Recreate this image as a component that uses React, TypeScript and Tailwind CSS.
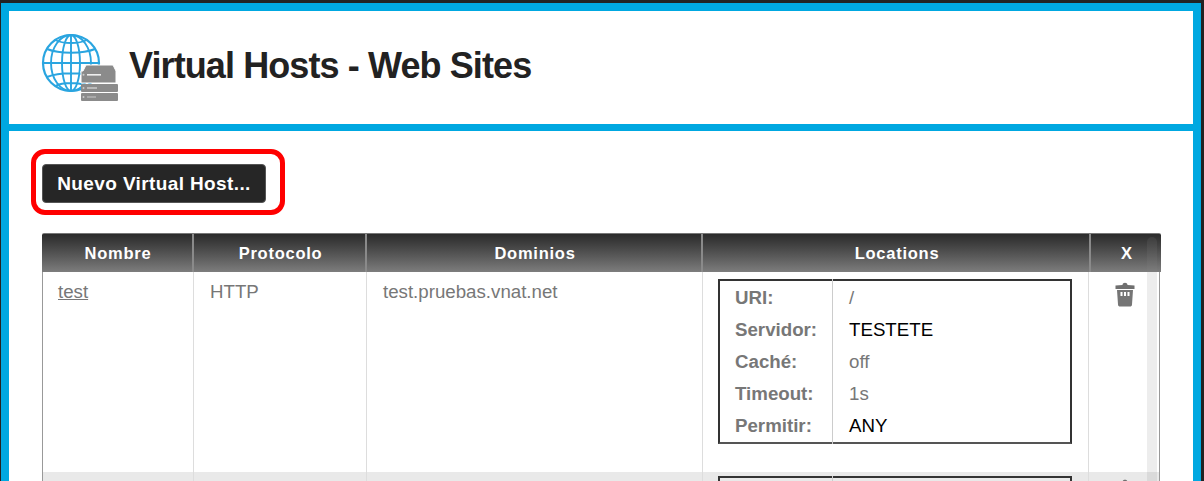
const font = "font-['Liberation_Sans',Arial,sans-serif]";

function Globe() {
  return (
    <svg width="80" height="74" viewBox="0 0 80 74" className="shrink-0">
      <g fill="none" stroke="#2aa5e0" strokeWidth="1.9">
        <circle cx="30" cy="30" r="28" strokeWidth="2.2" />
        <ellipse cx="30" cy="30" rx="9" ry="28" />
        <ellipse cx="30" cy="30" rx="20" ry="28" />
        <path d="M30 2V58M2 30H58M6 16C18 21 42 21 54 16M6 44C18 39 42 39 54 44M14 7C22 11 38 11 46 7M14 53C22 49 38 49 46 53" />
      </g>
      <g>
        <path d="M42 38L45 32H72L75 38V50H40V38Z" fill="#8b8b8b" stroke="#fff" strokeWidth="1" />
        <rect x="40" y="51" width="37" height="8" rx="1" fill="#8b8b8b" />
        <rect x="40" y="60" width="37" height="8" rx="1" fill="#8b8b8b" />
        <rect x="46" y="41" width="14" height="1.6" fill="#eee" />
        <rect x="46" y="54" width="10" height="2" fill="#bbb" />
        <rect x="46" y="63" width="9" height="2" fill="#aaa" />
        <circle cx="42.5" cy="41.8" r="1" fill="#ccc" />
        <circle cx="42.5" cy="55" r="1" fill="#ccc" />
        <circle cx="42.5" cy="64" r="1" fill="#ccc" />
      </g>
    </svg>
  );
}

function Trash() {
  return (
    <svg width="20" height="26" viewBox="0 0 20 26">
      <path d="M7.5 4C7.5 1 12.5 1 12.5 4L19.5 4.5V8H.5V4.5Z" fill="#6f6f6f" />
      <path d="M2 9H18L17 23.5C17 25 16 25.5 15 25.5H5C4 25.5 3 25 3 23.5Z" fill="#757575" />
      <path d="M5.5 11H7.5V15H5.5ZM9 11H11V15H9ZM12.5 11H14.5V15H12.5Z" fill="#fff" />
    </svg>
  );
}

const rows: [string, string, boolean][] = [
  ["URI:", "/", false],
  ["Servidor:", "TESTETE", true],
  ["Caché:", "off", false],
  ["Timeout:", "1s", false],
  ["Permitir:", "ANY", true],
];

function LocationBox({ showRows = true }: { showRows?: boolean }) {
  return (
    <div className="relative grid w-[354px] grid-cols-[113px_1fr] border-2 border-[#333] border-b-[#555] pt-px">
      {showRows &&
        rows.map(([k, v, dark]) => (
          <div key={k} className="contents">
            <div className="flex h-[32px] items-center pl-[15px] text-[18.7px] font-bold text-[#777]">{k}</div>
            <div className={`flex h-[32px] items-center pl-[16px] text-[18.7px] ${dark ? "text-black" : "text-[#777]"}`}>
              {v}
            </div>
          </div>
        ))}
      {!showRows && <div className="h-[20px]" />}
      <div className="absolute bottom-[-2px] left-[112px] top-[-2px] w-px bg-[#ccc]" />
    </div>
  );
}

export default function App() {
  return (
    <div className={`h-[481px] w-[1204px] overflow-hidden bg-[#222] pl-px pr-[3px] pt-[3px] ${font}`}>
      <div className="flex h-[478px] flex-col overflow-hidden border-x-8 border-t-8 border-[#00a8e1] bg-white">
        <header className="flex h-[120px] shrink-0 items-start border-b-[7px] border-[#00a8e1] pl-[32px] pt-[22px]">
          <Globe />
          <h1 className="ml-[8px] mt-[9px] text-[36px] font-bold leading-[48px] tracking-[-0.9px] text-[#222]">
            Virtual Hosts - Web Sites
          </h1>
        </header>
        <main className="relative flex-1 pl-[33px] pt-[33px]">
          <button className="h-[39px] w-[224px] rounded-[4px] border border-[#555] bg-[#262626] pt-px text-[19px] font-bold tracking-[0.38px] text-white">
            Nuevo Virtual Host...
          </button>
          <div className="pointer-events-none absolute left-[22px] top-[18px] h-[66px] w-[254px] rounded-[14px] border-[5px] border-[#ff0000]" />

          <div className="relative mt-[30px] w-[1119px]">
            <div className="grid h-[39px] grid-cols-[152px_173px_336px_388px_70px] rounded-t-[2px] border-t border-[#777] bg-gradient-to-b from-[#2b2b2b] to-[#7d7d7d] text-[16.5px] font-bold tracking-[0.75px] text-white">
              <div className="flex items-center justify-center border-r-2 border-[#8a8a8a] pl-[2px]">Nombre</div>
              <div className="flex items-center justify-center border-r-2 border-[#8a8a8a] pl-[2px]">Protocolo</div>
              <div className="flex items-center justify-center border-r-2 border-[#8a8a8a] pl-[2px]">Dominios</div>
              <div className="flex items-center justify-center border-r-2 border-[#8a8a8a] pl-[2px]">Locations</div>
              <div className="flex items-center justify-center pl-[2px]">X</div>
            </div>
            <div className="grid w-[1118px] grid-cols-[151px_173px_336px_386px_1fr] border-x border-x-[#999] text-[18.7px] text-[#777]">
              <div className="h-[200px] border-r border-[#ddd] pl-[15px] pt-[6px]">
                <a className="underline">test</a>
              </div>
              <div className="border-r border-[#ddd] pl-[16px] pt-[6px]">HTTP</div>
              <div className="border-r border-[#ddd] pl-[16px] pt-[6px]">test.pruebas.vnat.net</div>
              <div className="border-r border-[#ddd] pl-[15px] pt-[7px]">
                <LocationBox />
              </div>
              <div className="pl-[26px] pt-[9px]">
                <Trash />
              </div>
              <div className="h-[20px] border-r border-[#ddd] bg-[#e9e9e9]" />
              <div className="border-r border-[#ddd] bg-[#e9e9e9]" />
              <div className="border-r border-[#ddd] bg-[#e9e9e9]" />
              <div className="border-r border-[#ddd] bg-[#e9e9e9] pl-[15px] pt-[4px]">
                <LocationBox showRows={false} />
              </div>
              <div className="overflow-hidden bg-[#e9e9e9] pl-[26px] pt-[6px]">
                <Trash />
              </div>
            </div>
            <div className="absolute bottom-0 right-[4px] top-[4px] w-[10px] rounded-t-[5px] bg-[#888]/15" />
          </div>
        </main>
      </div>
    </div>
  );
}
